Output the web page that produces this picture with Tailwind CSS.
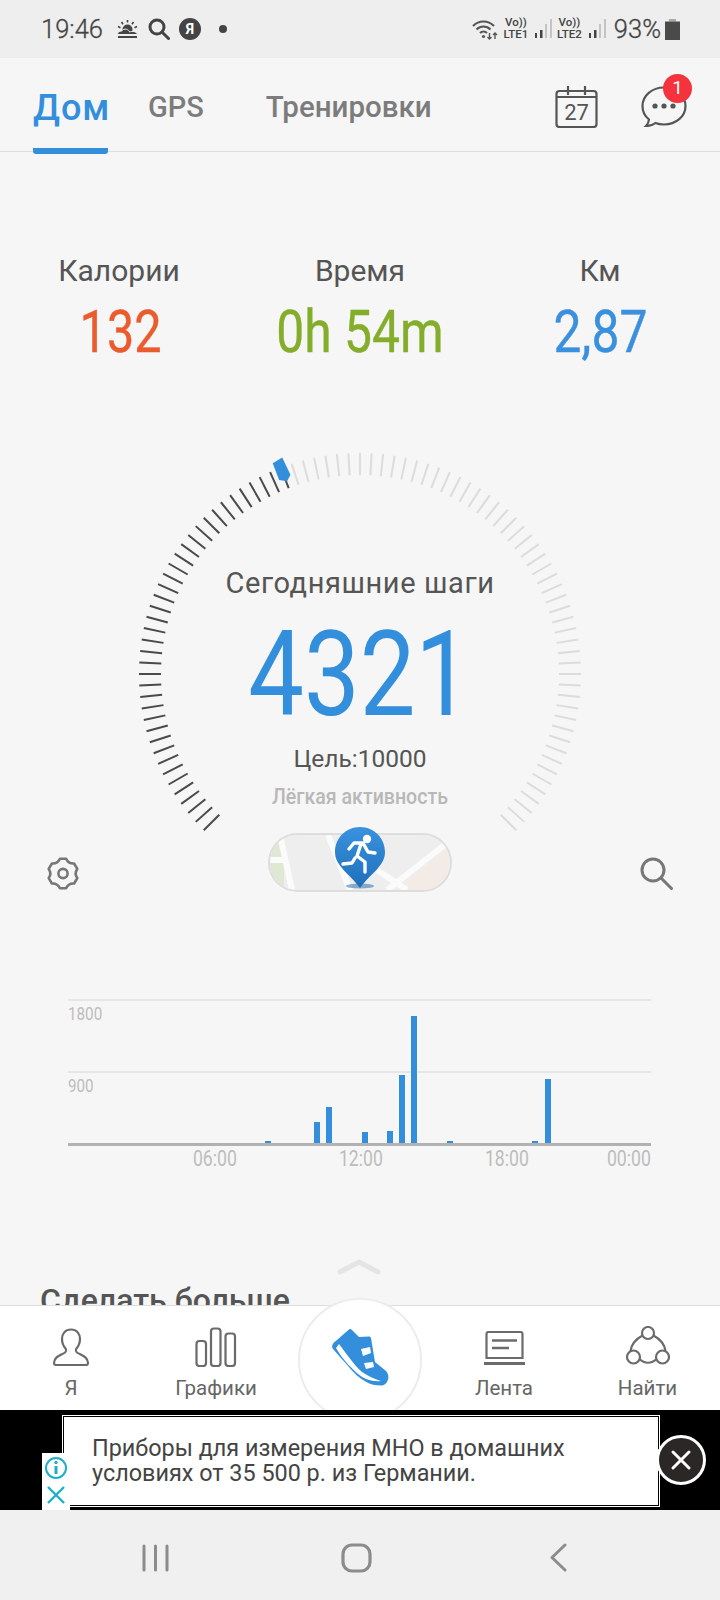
<!DOCTYPE html>
<html lang="ru">
<head>
    <meta charset="UTF-8">
    <meta name="viewport" content="width=device-width, initial-scale=1.0">
    <title>Шаги</title>
    <script src="https://cdn.jsdelivr.net/npm/@tailwindcss/browser@4"></script>
</head>
<body class="bg-[#f6f6f6] font-['Roboto',sans-serif]">
<div class="w-[720px] h-[1600px] overflow-hidden flex flex-col relative">

    <!-- status bar -->
    <div class="h-[58px] shrink-0 bg-[#eeeeee] flex items-center text-[#444] relative">
        <span class="ml-[41px] w-[66px] text-[25.5px] leading-[30px] font-light [-webkit-text-stroke:0.3px_#444]">19:46</span>
        <svg class="ml-[10px]" width="21" height="18" viewBox="0 0 21 18" fill="#444">
            <circle cx="10.500" cy="9.500" r="5"/>
            <path d="M10.500 0v2.500M4.500 2l1.500 2.300M16.500 2l-1.500 2.300M1 6.500l2.500 1.200M20 6.500l-2.500 1.200" stroke="#444" stroke-width="1.600"/>
            <path d="M.5 14.500c0-2.300 2-3.800 4-3.300 1-1.700 3-2.400 5-1.900 1.500.4 2.700 1.400 3.200 2.700 2.500-1.200 7-.5 7.800 2.500z" stroke="#eeeeee" stroke-width="1"/>
            <path d="M1 16h19v2H1z"/>
        </svg>
        <svg class="ml-[10px]" width="22" height="22" viewBox="0 0 22 22" fill="none" stroke="#444" stroke-width="3"><circle cx="9" cy="9" r="7"/><path d="M14 14l6.500 6.500" stroke-linecap="round"/></svg>
        <span class="ml-[9px] w-[22px] h-[22px] rounded-full bg-[#444] text-white text-[14px] font-bold flex items-center justify-center">Я</span>
        <span class="ml-[18px] w-[8px] h-[8px] rounded-full bg-[#444]"></span>

        <div class="ml-auto mr-[40px] flex items-center">
            <svg width="26" height="21" viewBox="0 0 26 21" fill="none" stroke="#555" stroke-width="2.200">
                <path d="M1 7c6-6 15-6 21 0M4.500 10.500c4-4 10-4 14 0M8 14c2-2 5-2 7 0"/>
                <circle cx="11.500" cy="17.500" r="1.600" fill="#555" stroke="none"/>
                <path d="M17.500 14v6M15.500 18l2 2 2-2M23 20v-6M21 16l2-2 2 2" stroke-width="1.400"/>
            </svg>
            <div class="ml-[5px] w-[26px] flex flex-col items-center text-[#444] leading-none">
                <span class="text-[11.5px] font-medium h-[12px]">Vo))</span>
                <span class="text-[11.5px] font-medium">LTE1</span>
            </div>
            <svg class="ml-[5px]" width="18" height="20" viewBox="0 0 18 20"><path d="M1 14h2v5H1zM6 11h2.500v8H6z" fill="#444"/><path d="M11 5h2v14h-2zM16 0h2v19h-2z" fill="#c4c4c4"/></svg>
            <div class="ml-[4px] w-[27px] flex flex-col items-center text-[#444] leading-none">
                <span class="text-[11.5px] font-medium h-[12px]">Vo))</span>
                <span class="text-[11.5px] font-medium">LTE2</span>
            </div>
            <svg class="ml-[5px]" width="18" height="20" viewBox="0 0 18 20"><path d="M1 14h2v5H1zM6 11h2.500v8H6z" fill="#444"/><path d="M11 5h2v14h-2zM16 0h2v19h-2z" fill="#c4c4c4"/></svg>
            <span class="ml-[8px] text-[25.5px] leading-[30px] font-light [-webkit-text-stroke:0.3px_#444]">93%</span>
            <svg class="ml-[4px]" width="15" height="21" viewBox="0 0 15 21"><path d="M4 0h7v2.500H4z" fill="#aaa"/><path d="M0 2.500h15V21H0z" fill="#4a4a4a"/></svg>
        </div>
    </div>

    <!-- tabs -->
    <div class="h-[94px] shrink-0 border-b border-[#dddddd] flex items-start relative">
        <div class="ml-[33px] mt-[30px] w-[75px] h-[66px] border-b-[6px] border-[#338fdc] rounded-b-[3px] text-[36px] leading-[40px] font-medium text-[#338fdc] tracking-[1px] relative z-10">Дом</div>
        <div class="ml-[40px] mt-[27px] text-[29px] leading-[44px] font-medium text-[#7c7c7c]">GPS</div>
        <div class="ml-[62px] mt-[27px] text-[29.5px] leading-[44px] font-medium text-[#7c7c7c]">Тренировки</div>
        <svg class="absolute left-[555px] top-[28px]" width="43" height="42" viewBox="0 0 43 42" fill="none" stroke="#555" stroke-width="2.200">
            <rect x="1.500" y="5" width="40" height="36" rx="3"/>
            <path d="M1.500 11h40M13 0v9M30 0v9M17 5h9"/>
            <text x="21.500" y="34" text-anchor="middle" font-family="Roboto" font-size="22" fill="#555" stroke="none">27</text>
        </svg>
        <svg class="absolute left-[641px] top-[28px]" width="46" height="41" viewBox="0 0 46 41" fill="none" stroke="#555" stroke-width="2.200">
            <path d="M23 1.500c12 0 21.500 8 21.500 18.500S35 38.500 23 38.500c-3 0-6-.5-8.500-1.500-2.500 2-6 3-9.500 3 1.500-1.500 2.700-3.500 3-6.500C3.500 30 1.500 25.500 1.500 20 1.500 9.500 11 1.500 23 1.500z"/>
            <g fill="#555" stroke="none"><circle cx="14" cy="20" r="2.600"/><circle cx="23" cy="20" r="2.600"/><circle cx="32" cy="20" r="2.600"/></g>
        </svg>
        <span class="absolute left-[663px] top-[16px] w-[29px] h-[29px] rounded-full bg-[#f4333c] text-white text-[19px] flex items-center justify-center">1</span>
    </div>

    <!-- main scroll area -->
    <div class="h-[1153px] shrink-0 overflow-hidden flex flex-col relative">
        <div class="mt-[99px] h-[112px] relative">
            <div class="absolute left-[19px] w-[200px] flex flex-col items-center">
                <span class="text-[30px] leading-[40px] text-[#555]">Калории</span>
                <span class="mt-[5px] ml-[3px] text-[60px] leading-[72px] text-[#ea5b2e] scale-x-[0.81] whitespace-nowrap [-webkit-text-stroke:0.4px_#ea5b2e]">132</span>
            </div>
            <div class="absolute left-[210px] w-[300px] flex flex-col items-center">
                <span class="text-[30px] leading-[40px] text-[#555]">Время</span>
                <span class="mt-[5px] text-[60px] leading-[72px] text-[#84ad2c] scale-x-[0.83] whitespace-nowrap [-webkit-text-stroke:0.4px_#84ad2c]">0h 54m</span>
            </div>
            <div class="absolute left-[500px] w-[200px] flex flex-col items-center">
                <span class="text-[30px] leading-[40px] text-[#555]">Км</span>
                <span class="mt-[5px] text-[60px] leading-[72px] text-[#3a90dc] scale-x-[0.83] whitespace-nowrap [-webkit-text-stroke:0.4px_#3a90dc]">2,87</span>
            </div>
        </div>

        <!-- gauge -->
        <div class="relative mt-[89px] h-[460px] flex flex-col items-center">
            <svg id="gauge" class="absolute left-[130px] top-[-8px]" width="460" height="460" viewBox="0 0 460 460"></svg>
            <span class="mt-[111px] text-[29px] leading-[40px] text-[#555] tracking-[0.6px]">Сегодняшние шаги</span>
            <span class="mt-[14px] h-[116px] text-[118px] leading-[116px] text-[#338fdc] scale-x-[0.84] whitespace-nowrap">4321</span>
            <span class="mt-[11px] text-[24.5px] leading-[30px] text-[#555]">Цель:10000</span>
            <span class="mt-[9px] text-[22px] leading-[28px] font-medium text-[#b8b8b8] scale-x-[0.89] whitespace-nowrap">Лёгкая активность</span>
            <div class="mt-[22px] w-full flex items-center justify-between relative">
                <svg class="ml-[47px] mt-[22px]" width="32" height="35" viewBox="-1 -1 32 35" fill="none" stroke="#777" stroke-width="2.600" stroke-linejoin="round">
                    <path d="M11.900 1.800H18.100Q20.500 7 26.100 6.500L29.300 11.900Q26 16.500 29.300 21.100L26.100 26.500Q20.500 26 18.100 31.200H11.900Q9.500 26 3.900 26.500L.7 21.100Q4 16.500 .7 11.900L3.900 6.500Q9.500 7 11.900 1.800Z"/>
                    <circle cx="15" cy="16.500" r="4.600"/>
                </svg>
                <div class="relative w-[184px] h-[59px] rounded-full border-2 border-[#dddddd] overflow-hidden bg-[#f0f0f0]">
                    <svg width="180" height="55" viewBox="0 0 180 55" class="block">
                        <path d="M0 0h180v55H0z" fill="#eeeeee"/>
                        <path d="M0 0h14v55H0z" fill="#dfe8d2"/>
                        <path d="M125 55L180 12v43z" fill="#f3ebe6"/>
                        <path d="M0 25h14M10 0l12 55M58 0l22 55M177 8L117 55M107 35l30 20" stroke="#fbfbfb" stroke-width="6" fill="none"/>
                    </svg>
                </div>
                <svg class="absolute left-[334px] top-[-7px]" width="52" height="64" viewBox="0 0 52 64">
                    <defs>
                        <linearGradient id="pinFill" x1="0" y1="0" x2="0" y2="1">
                            <stop offset="0" stop-color="#3a92de"/>
                            <stop offset="1" stop-color="#1f6fba"/>
                        </linearGradient>
                    </defs>
                    <ellipse cx="26" cy="60" rx="14" ry="2.500" fill="#2f6fa8" opacity=".55"/>
                    <path d="M26 1C12 1 1 12 1 26c0 14 14 21 25 36 11-15 25-22 25-36C51 12 40 1 26 1z" fill="url(#pinFill)"/>
                    <circle cx="33" cy="13" r="4.200" fill="#fff"/>
                    <path d="M15 23l5-6h9l5 9 7 1M27 18l-4 12 8 6v10M21 32l-3 5-9 1" fill="none" stroke="#fff" stroke-width="3.400" stroke-linecap="round" stroke-linejoin="round"/>
                </svg>
                <svg class="mr-[47px] mt-[22px]" width="33" height="33" viewBox="0 0 33 33" fill="none" stroke="#777" stroke-width="3"><circle cx="13" cy="13" r="11"/><path d="M21 21l10.500 10.500" stroke-linecap="round"/></svg>
            </div>
        </div>

        <!-- hourly chart -->
        <div class="absolute left-[68px] top-[847px] w-[583px] h-[147px] border-t-2 border-[#e6e6e6]">
            <span class="absolute left-0 top-[2px] text-[19px] leading-[22px] text-[#bdbdbd] scale-x-[0.8] origin-left">1800</span>
            <span class="absolute left-0 top-[74px] text-[19px] leading-[22px] text-[#bdbdbd] scale-x-[0.8] origin-left">900</span>
            <div class="absolute left-0 right-0 top-[70px] h-[2px] bg-[#e6e6e6]"></div>
            <div id="bars" class="absolute left-0 right-0 bottom-0 h-[142px] flex items-end border-b-[3px] border-[#b2b2b2]"></div>
            <div class="absolute top-[145px] left-0 w-full text-[22px] leading-[26px] text-[#bdbdbd]">
                <span class="absolute right-[414px] scale-x-[0.8] origin-right">06:00</span>
                <span class="absolute right-[268px] scale-x-[0.8] origin-right">12:00</span>
                <span class="absolute right-[122px] scale-x-[0.8] origin-right">18:00</span>
                <span class="absolute right-0 scale-x-[0.8] origin-right">00:00</span>
            </div>
        </div>

        <svg class="absolute left-[337px] top-[1107px]" width="44" height="16" viewBox="0 0 44 16" fill="none" stroke="#e4e4e4" stroke-width="5" stroke-linecap="round"><path d="M3 13L22 3l19 10"/></svg>
        <div class="absolute left-[40px] top-[1130px] text-[32px] leading-[36px] font-medium text-[#555] whitespace-nowrap">Сделать больше</div>
    </div>

    <!-- bottom nav -->
    <div class="h-[105px] shrink-0 bg-white border-t border-[#dddddd] flex relative z-10">
        <div class="w-[142px] flex flex-col items-center">
            <svg class="mt-[22px]" width="38" height="38" viewBox="0 0 38 38" fill="none" stroke="#6b6b6b" stroke-width="2.200" stroke-linejoin="round">
                <path d="M19 1.500c-6 0-9 4.500-9 9.500 0 4 1.800 7.500 3.500 9.500.8 1 .7 3-.5 4-3 2.300-11 3.500-11 10.500 0 1.300.7 2 2 2h30c1.300 0 2-.7 2-2 0-7-8-8.200-11-10.500-1.200-1-1.300-3-.5-4C26.200 18.500 28 15 28 11c0-5-3-9.500-9-9.500z"/>
            </svg>
            <span class="mt-[10px] text-[20.5px] leading-[24px] text-[#666]">Я</span>
        </div>
        <div class="w-[148px] flex flex-col items-center">
            <svg class="mt-[21px]" width="42" height="40" viewBox="0 0 42 40" fill="none" stroke="#6b6b6b" stroke-width="2.200"><rect x="1.500" y="14" width="9.500" height="25" rx="3"/><rect x="16" y="1.500" width="9.500" height="37.500" rx="3"/><rect x="30.500" y="6.500" width="9.500" height="32.500" rx="3"/></svg>
            <span class="mt-[9px] text-[20.5px] leading-[24px] text-[#666]">Графики</span>
        </div>
        <div class="w-[140px]"></div>
        <div class="w-[148px] flex flex-col items-center">
            <svg class="mt-[25px]" width="41" height="34" viewBox="0 0 41 34" fill="none" stroke="#6b6b6b" stroke-width="2.200"><path d="M2.500 27V3a2 2 0 0 1 2-2h32a2 2 0 0 1 2 2v24z"/><path d="M0 32.500h41" stroke-width="3"/><path d="M8 9.500h25M8 17h17" stroke-width="2.400"/></svg>
            <span class="mt-[11px] text-[20.5px] leading-[24px] text-[#666]">Лента</span>
        </div>
        <div class="w-[142px] flex flex-col items-center">
            <svg class="mt-[20px] -ml-[3px]" width="44" height="41" viewBox="0 0 44 41" fill="none" stroke="#6b6b6b" stroke-width="2.200"><circle cx="22" cy="7" r="6"/><circle cx="7.500" cy="31" r="6.500"/><circle cx="36.500" cy="31" r="6.500"/><path d="M16.500 9.500C10 13 5.500 18 4.500 25M27.500 9.500C34 13 38.500 18 39.500 25M13.500 33c5 5 12 5 17 0"/></svg>
            <span class="mt-[9px] -ml-[3px] text-[20.5px] leading-[24px] text-[#666]">Найти</span>
        </div>
        <div class="absolute left-[298px] top-[-8px] w-[124px] h-[124px] rounded-full bg-white border-2 border-[#ececec] flex items-start justify-center">
            <svg class="mt-[29px] ml-[1px]" width="58" height="58" viewBox="0 0 58 58">
                <path d="M17 .5c1-.7 2-.5 3 .5l7 7 10-.5c1 0 1.500.5 2 1.500l4 24 11 9c2 2 3 6 2 8.500-1 3.500-3.500 6-6.500 6-6 0-11-1-16-4-7-4-11-8-17-15L1 20c-1.500-2-1-4 .5-6z" fill="#338fdc"/>
                <path d="M7 15C14 24 22 36 30 43 36 47 42 50 49 52 40 53 32 50 26 45 17 37 9 28 4 19z" fill="#fff"/>
                <path d="M29 20l9-2 1 6-8 3zM32 34l9-1 1 5-8 2z" fill="#fff"/>
            </svg>
        </div>
    </div>

    <!-- ad -->
    <div class="h-[100px] shrink-0 bg-black relative z-20 flex">
        <div class="ml-[62px] mt-[5px] w-[598px] h-[92px] bg-black border border-white">
            <div class="m-[1px] h-[88px] bg-white pl-[28px] pt-[19px] text-[23.4px] leading-[25px] text-[#444] whitespace-nowrap">Приборы для измерения МНО в домашних<br>условиях от 35 500 р. из Германии.</div>
        </div>
        <div class="absolute left-[42px] top-[43px] w-[28px] h-[57px] bg-white flex flex-col items-center">
            <svg class="mt-[2px]" width="24" height="25" viewBox="0 0 24 25" fill="none" stroke="#1faec4" stroke-width="2"><circle cx="12" cy="13" r="10"/><path d="M12 11v8" stroke-width="3"/><circle cx="12" cy="7.500" r="1.700" fill="#1faec4" stroke="none"/></svg>
            <svg class="mt-[5px]" width="20" height="20" viewBox="0 0 20 20" fill="none" stroke="#1faec4" stroke-width="2.400"><path d="M2 2l16 16M18 2L2 18"/></svg>
        </div>
        <div class="absolute left-[656px] top-[25px] w-[50px] h-[50px] rounded-full bg-[#2b2726] border-[3px] border-white flex items-center justify-center">
            <svg width="22" height="22" viewBox="0 0 22 22" fill="none" stroke="#fff" stroke-width="3" stroke-linecap="round"><path d="M3 3l16 16M19 3L3 19"/></svg>
        </div>
    </div>

    <!-- android nav -->
    <div class="flex-1 bg-[#f0f0f0] relative">
        <svg class="absolute left-[142px] top-[34px]" width="28" height="28" viewBox="0 0 28 28" stroke="#8c8c8c" stroke-width="3" stroke-linecap="round"><path d="M2 2v24M13.500 2v24M25 2v24"/></svg>
        <svg class="absolute left-[341px] top-[33px]" width="31" height="30" viewBox="0 0 31 30" fill="none" stroke="#8c8c8c" stroke-width="3.200"><rect x="2" y="2" width="27" height="26" rx="9"/></svg>
        <svg class="absolute left-[549px] top-[33px]" width="19" height="29" viewBox="0 0 19 29" fill="none" stroke="#8c8c8c" stroke-width="3" stroke-linecap="round" stroke-linejoin="round"><path d="M16 2L3 14.500 16 27"/></svg>
    </div>
</div>

<script>
    // gauge ticks: 270 degree arc, one tick every 3 degrees
    const gauge = document.getElementById('gauge');
    const cx = 230, cy = 230;
    let ticks = '';
    for (let a = -135; a <= 135; a += 3) {
        const rad = a * Math.PI / 180;
        const sin = Math.sin(rad), cos = Math.cos(rad);
        const color = a <= -21 ? '#4a4a4a' : '#dcdcdc';
        ticks += `<line x1="${cx + 199 * sin}" y1="${cy - 199 * cos}" x2="${cx + 221 * sin}" y2="${cy - 221 * cos}" stroke="${color}" stroke-width="2"/>`;
    }
    // blue progress marker
    ticks += `<path d="M-6 -228 L5 -230 L6.500 -211 L1 -206 L-6 -210 Z" fill="#338fdc" transform="translate(${cx} ${cy}) rotate(-21)"/>`;
    gauge.innerHTML = ticks;

    // half-hour step buckets, bar height in px
    const steps = { 16: 2, 20: 21, 21: 36, 24: 11, 26: 12, 27: 68, 28: 127, 31: 2, 38: 2, 39: 64 };
    const bars = document.getElementById('bars');
    for (let i = 0; i < 48; i++) {
        const col = document.createElement('div');
        col.className = 'flex-1 flex justify-center items-end';
        if (steps[i]) {
            const bar = document.createElement('div');
            bar.className = 'w-[6px] bg-[#338fdc]';
            bar.style.height = steps[i] + 'px';
            col.appendChild(bar);
        }
        bars.appendChild(col);
    }
</script>
</body>
</html>
